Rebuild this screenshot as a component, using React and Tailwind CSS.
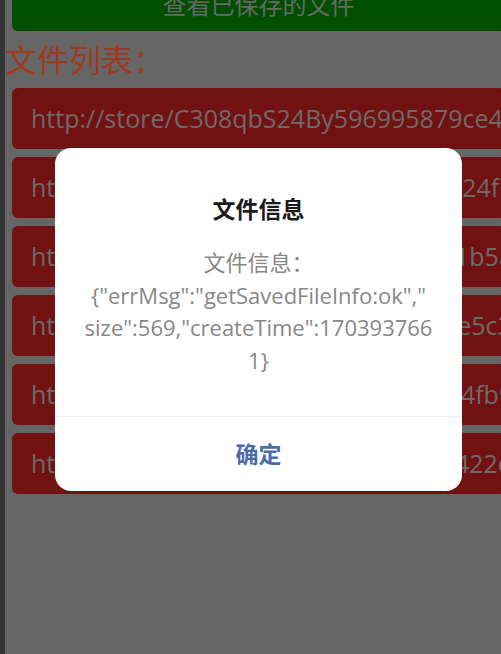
import React from "react";

const files = [
  "http://store/C308qbS24By596995879ce4a2f1.png",
  "http://store/C308qbS24By7d1e20a8S24fb3c9.png",
  "http://store/C308qbS24By8f3c20d1e1b5a7c0.png",
  "http://store/C308qbS24Bya92d4f071e5c3b8.png",
  "http://store/C308qbS24By3c8e61d024fb9e2.png",
  "http://store/C308qbS24By6b0f9a3c7422d1e.png",
];

const font = {
  fontFamily: '"Open Sans", "Noto Sans CJK SC", sans-serif',
};

export default function App() {
  return (
    <div
      className="relative w-[501px] h-[654px] overflow-hidden bg-[#666666] border-l-[5px] border-[#353535]"
      style={font}
    >
      <div className="w-[500px] pl-[7px]">
        {/* Saved files button, scrolled partly out of view */}
        <div className="-mt-[21px] h-[52px] rounded-b-md bg-[#004f00] flex items-center justify-center text-[24px] text-[#686868]">
          查看已保存的文件
        </div>

        <div className="-ml-[7px] mt-[7px] text-[32px] leading-[44px] text-[#9e3a1f]">
          文件列表：
        </div>

        <div className="mt-[6px] flex flex-col gap-[8px]">
          {files.map((f) => (
            <div
              key={f}
              className="h-[61px] rounded-md bg-[#721111] flex items-center pl-[19px] text-[25px] text-[#6b6b6b] whitespace-nowrap overflow-hidden"
            >
              {f}
            </div>
          ))}
        </div>
      </div>

      {/* Modal */}
      <div className="absolute left-[50px] top-[148px] w-[407px] rounded-2xl bg-white overflow-hidden">
        <div className="pt-[46px] px-4 pb-[40px] text-center">
          <div className="text-[23px] leading-[30px] font-bold text-[#1a1a1a]">
            文件信息
          </div>
          <div className="mt-[22px] text-[22px] leading-[32.5px] text-[#888888]">
            <div>文件信息：</div>
            <div>{'{"errMsg":"getSavedFileInfo:ok","'}</div>
            <div>{'size":569,"createTime":170393766'}</div>
            <div>{"1}"}</div>
          </div>
        </div>
        <div className="h-[75px] border-t border-[#f0f0f0] flex items-center justify-center text-[23px] font-bold text-[#4b6aaa]">
          确定
        </div>
      </div>
    </div>
  );
}
